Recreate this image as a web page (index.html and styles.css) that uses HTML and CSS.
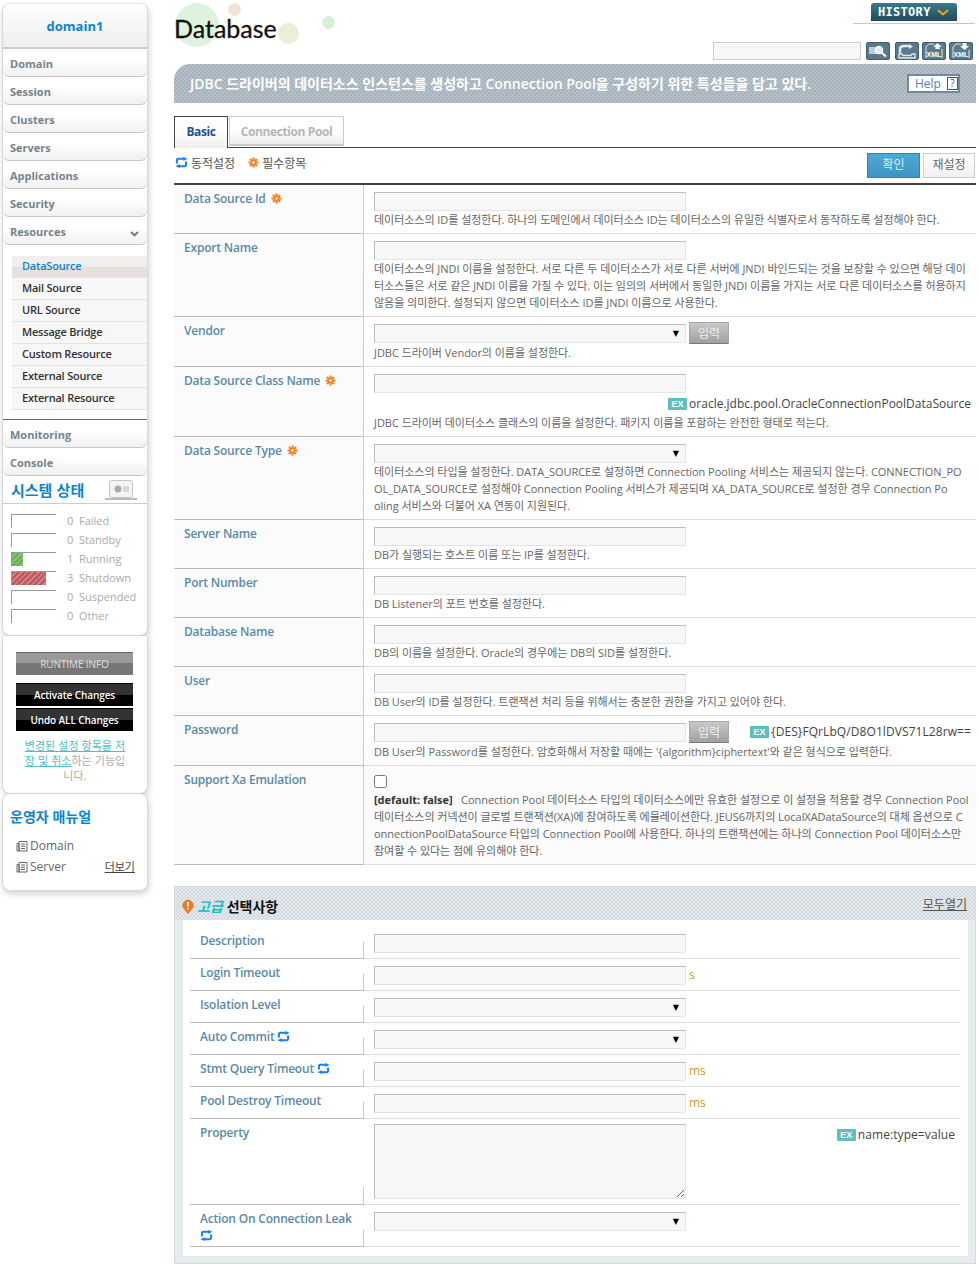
FILE: index.html
```html
<!doctype html>
<html lang="ko">
  <head>
    <meta charset="UTF-8" />
    <title>Database</title>
    <link rel="stylesheet" href="styles.css">
  </head>
  <body>
    <svg class="icon-defs" width="0" height="0">
      <symbol id="sync" viewBox="0 0 14 12">
        <path d="M2 7V3.200Q2 2 3.200 2H10" fill="none" stroke="currentColor" stroke-width="2.200"/>
        <path d="M9 0l4.500 2L9 4.400z" fill="currentColor"/>
        <path d="M12 5v3.800Q12 10 10.800 10H4" fill="none" stroke="currentColor" stroke-width="2.200"/>
        <path d="M5 7.600L.5 10 5 12z" fill="currentColor"/>
      </symbol>
      <symbol id="req" viewBox="0 0 12 12">
        <g stroke="currentColor" stroke-width="2.400">
          <path d="M6 .5v11M.5 6h11M2.100 2.100l7.800 7.800M9.900 2.100l-7.800 7.800"/>
        </g>
        <circle cx="6" cy="6" r="1.400" fill="#fff"/>
      </symbol>
      <symbol id="doc" viewBox="0 0 12 12">
        <path d="M3 1.500h8v9.500H3zM1 3.500h2v7.500H1zM5 4h4M5 6.200h4M5 8.500h4" fill="none" stroke="#666" stroke-width="1"/>
      </symbol>
    </svg>

    <div class="layout">
      <aside class="side">
        <div class="side-box">
          <div class="side-title">domain1</div>
          <a class="nav-item" href="#">Domain</a>
          <a class="nav-item" href="#">Session</a>
          <a class="nav-item" href="#">Clusters</a>
          <a class="nav-item" href="#">Servers</a>
          <a class="nav-item" href="#">Applications</a>
          <a class="nav-item" href="#">Security</a>
          <a class="nav-item nav-open" href="#">Resources
            <svg class="chev" width="9" height="6" viewBox="0 0 9 6"><path d="M1 1l3.500 3.500L8 1" fill="none" stroke="#777" stroke-width="1.800"/></svg>
          </a>
          <ul class="sub-nav">
            <li class="on">DataSource</li>
            <li>Mail Source</li>
            <li>URL Source</li>
            <li>Message Bridge</li>
            <li>Custom Resource</li>
            <li>External Source</li>
            <li>External Resource</li>
          </ul>
          <a class="nav-item nav-sep" href="#">Monitoring</a>
          <a class="nav-item" href="#">Console</a>

          <div class="status-head">
            <span>시스템 상태</span>
            <svg width="32" height="22" viewBox="0 0 32 22">
              <rect x="4.500" y="1.500" width="23" height="17" rx="2" fill="#f4f4f4" stroke="#c4c4c4"/>
              <circle cx="13" cy="10" r="3.500" fill="#aaa"/>
              <path d="M18 8h6M18 10h6M18 12h6" stroke="#bbb"/>
              <path d="M0 20h32" stroke="#bbb" stroke-width="2"/>
            </svg>
          </div>
          <div class="status-list">
            <div class="status-row"><span class="bar"></span><b>0</b><span>Failed</span></div>
            <div class="status-row"><span class="bar"></span><b>0</b><span>Standby</span></div>
            <div class="status-row"><span class="bar"><i class="fill-green" style="width:11px"></i></span><b>1</b><span>Running</span></div>
            <div class="status-row"><span class="bar"><i class="fill-red" style="width:34px"></i></span><b>3</b><span>Shutdown</span></div>
            <div class="status-row"><span class="bar"></span><b>0</b><span>Suspended</span></div>
            <div class="status-row"><span class="bar"></span><b>0</b><span>Other</span></div>
          </div>
        </div>

        <div class="side-box change-box">
          <button class="side-btn btn-grey">RUNTIME INFO</button>
          <button class="side-btn btn-black">Activate Changes</button>
          <button class="side-btn btn-black btn-tight">Undo ALL Changes</button>
          <p class="change-note"><a href="#">변경된 설정 항목을 저<br>장 및 취소</a>하는 기능입<br>니다.</p>
        </div>

        <div class="side-box manual-box">
          <h3>운영자 매뉴얼</h3>
          <div class="manual-row"><svg width="12" height="12"><use href="#doc"/></svg>Domain</div>
          <div class="manual-row"><svg width="12" height="12"><use href="#doc"/></svg>Server<a href="#">더보기</a></div>
        </div>
      </aside>

      <main class="main">
        <header class="page-head">
          <i class="dot dot-a"></i><i class="dot dot-b"></i><i class="dot dot-c"></i><i class="dot dot-d"></i>
          <h1>Database</h1>
          <div class="head-right">
            <div class="history">
              <span class="history-tab">HISTORY
                <svg width="12" height="7" viewBox="0 0 12 7"><path d="M1 1l5 4.500L11 1" fill="none" stroke="#f0a020" stroke-width="2"/></svg>
              </span>
            </div>
            <div class="tools">
              <input class="tool-input" type="text" />
              <span class="tool tool-search">
                <svg width="20" height="14" viewBox="0 0 20 14"><rect x="1" y="3" width="8" height="7" fill="#bcd"/><circle cx="11" cy="6" r="3.500" fill="#dde8f0" stroke="#fff" stroke-width="1.500"/><path d="M13.500 8.500L18 12.500" stroke="#fff" stroke-width="2"/></svg>
              </span>
              <span class="tool">
                <svg width="20" height="15" viewBox="0 0 20 15"><path d="M3 9V5Q3 2 7 2h6" fill="none" stroke="#e8e8e8" stroke-width="2.500"/><path d="M12 0l4 2.500L12 5z" fill="#e8e8e8"/><path d="M2 10h3l1 1.500h8l1-1.500h3v4H2z" fill="none" stroke="#e8e8e8" stroke-width="1.300"/></svg>
              </span>
              <span class="tool">
                <svg width="20" height="16" viewBox="0 0 20 16">
                  <path d="M2 15V4l3-3h5M15 5v1M18 6v9" fill="none" stroke="#dfe6ea"/>
                  <path d="M13.500 0L18 4h-2.500v2h-4V4H9z" fill="#fff"/>
                  <text class="xml-text" x="10" y="14">XML</text>
                </svg>
              </span>
              <span class="tool">
                <svg width="20" height="16" viewBox="0 0 20 16">
                  <path d="M2 15V4l3-3h5M18 7v8" fill="none" stroke="#dfe6ea"/>
                  <path d="M13.500 7L18 3h-2.500V0h-4v3H9z" fill="#fff"/>
                  <text class="xml-text" x="10" y="14">XML</text>
                </svg>
              </span>
            </div>
          </div>
        </header>

        <div class="banner">
          <p>JDBC 드라이버의 데이터소스 인스턴스를 생성하고 Connection Pool을 구성하기 위한 특성들을 담고 있다.</p>
          <a class="help" href="#">Help <span>?</span></a>
        </div>

        <div class="tabs">
          <a class="tab tab-on" href="#">Basic</a>
          <a class="tab" href="#">Connection Pool</a>
        </div>

        <div class="legend">
          <svg class="sync" width="13" height="11"><use href="#sync"/></svg><span>동적설정</span>
          <svg class="req legend-req" width="11" height="11"><use href="#req"/></svg><span>필수항목</span>
          <div class="legend-btns">
            <button class="btn-ok">확인</button>
            <button class="btn-reset">재설정</button>
          </div>
        </div>

        <section class="form-table">
          <div class="row">
            <div class="label">Data Source Id <svg class="req" width="11" height="11"><use href="#req"/></svg></div>
            <div class="cell">
              <input class="field" type="text" />
              <p class="desc">데이터소스의 ID를 설정한다. 하나의 도메인에서 데이터소스 ID는 데이터소스의 유일한 식별자로서 동작하도록 설정해야 한다.</p>
            </div>
          </div>
          <div class="row">
            <div class="label">Export Name</div>
            <div class="cell">
              <input class="field" type="text" />
              <p class="desc">데이터소스의 JNDI 이름을 설정한다. 서로 다른 두 데이터소스가 서로 다른 서버에 JNDI 바인드되는 것을 보장할 수 있으면 해당 데이<br>터소스들은 서로 같은 JNDI 이름을 가질 수 있다. 이는 임의의 서버에서 동일한 JNDI 이름을 가지는 서로 다른 데이터소스를 허용하지<br>않음을 의미한다. 설정되지 않으면 데이터소스 ID를 JNDI 이름으로 사용한다.</p>
            </div>
          </div>
          <div class="row row-btn">
            <div class="label">Vendor</div>
            <div class="cell">
              <div class="line">
                <span class="select"><select></select></span>
                <button class="btn-input">입력</button>
              </div>
              <p class="desc">JDBC 드라이버 Vendor의 이름을 설정한다.</p>
            </div>
          </div>
          <div class="row">
            <div class="label">Data Source Class Name <svg class="req" width="11" height="11"><use href="#req"/></svg></div>
            <div class="cell">
              <input class="field" type="text" />
              <div class="hint hint-line"><span class="ex">EX</span>oracle.jdbc.pool.OracleConnectionPoolDataSource</div>
              <p class="desc">JDBC 드라이버 데이터소스 클래스의 이름을 설정한다. 패키지 이름을 포함하는 완전한 형태로 적는다.</p>
            </div>
          </div>
          <div class="row">
            <div class="label">Data Source Type <svg class="req" width="11" height="11"><use href="#req"/></svg></div>
            <div class="cell">
              <span class="select"><select></select></span>
              <p class="desc">데이터소스의 타입을 설정한다. DATA_SOURCE로 설정하면 Connection Pooling 서비스는 제공되지 않는다. CONNECTION_PO<br>OL_DATA_SOURCE로 설정해야 Connection Pooling 서비스가 제공되며 XA_DATA_SOURCE로 설정한 경우 Connection Po<br>oling 서비스와 더불어 XA 연동이 지원된다.</p>
            </div>
          </div>
          <div class="row">
            <div class="label">Server Name</div>
            <div class="cell">
              <input class="field" type="text" />
              <p class="desc">DB가 실행되는 호스트 이름 또는 IP를 설정한다.</p>
            </div>
          </div>
          <div class="row">
            <div class="label">Port Number</div>
            <div class="cell">
              <input class="field" type="text" />
              <p class="desc">DB Listener의 포트 번호를 설정한다.</p>
            </div>
          </div>
          <div class="row">
            <div class="label">Database Name</div>
            <div class="cell">
              <input class="field" type="text" />
              <p class="desc">DB의 이름을 설정한다. Oracle의 경우에는 DB의 SID를 설정한다.</p>
            </div>
          </div>
          <div class="row">
            <div class="label">User</div>
            <div class="cell">
              <input class="field" type="text" />
              <p class="desc">DB User의 ID를 설정한다. 트랜잭션 처리 등을 위해서는 충분한 권한을 가지고 있어야 한다.</p>
            </div>
          </div>
          <div class="row row-btn">
            <div class="label">Password</div>
            <div class="cell">
              <div class="line">
                <input class="field" type="text" />
                <button class="btn-input">입력</button>
                <div class="hint"><span class="ex">EX</span>{DES}FQrLbQ/D8O1lDVS71L28rw==</div>
              </div>
              <p class="desc">DB User의 Password를 설정한다. 암호화해서 저장할 때에는 '{algorithm}ciphertext'와 같은 형식으로 입력한다.</p>
            </div>
          </div>
          <div class="row row-tint">
            <div class="label">Support Xa Emulation</div>
            <div class="cell">
              <input class="check" type="checkbox" />
              <p class="desc"><b>[default: false]</b> &nbsp; Connection Pool 데이터소스 타입의 데이터소스에만 유효한 설정으로 이 설정을 적용할 경우 Connection Pool<br>데이터소스의 커넥션이 글로벌 트랜잭션(XA)에 참여하도록 에뮬레이션한다. JEUS6까지의 LocalXADataSource의 대체 옵션으로 C<br>onnectionPoolDataSource 타입의 Connection Pool에 사용한다. 하나의 트랜잭션에는 하나의 Connection Pool 데이터소스만<br>참여할 수 있다는 점에 유의해야 한다.</p>
            </div>
          </div>
        </section>

        <section class="adv">
          <div class="adv-head">
            <svg width="12" height="15" viewBox="0 0 12 15"><path d="M6 15L1.500 9.500A5.500 5.500 0 1 1 10.500 9.500z" fill="#f07a20"/><path d="M6 3v4.500M6 9v1.500" stroke="#fff" stroke-width="2"/></svg>
            <h2><em>고급</em> 선택사항</h2>
            <a href="#">모두열기</a>
          </div>
          <div class="adv-body">
            <div class="adv-row">
              <div class="label">Description</div>
              <div class="cell"><input class="field" type="text" /></div>
            </div>
            <div class="adv-row">
              <div class="label">Login Timeout</div>
              <div class="cell"><input class="field" type="text" /><span class="unit">s</span></div>
            </div>
            <div class="adv-row">
              <div class="label">Isolation Level</div>
              <div class="cell"><span class="select"><select></select></span></div>
            </div>
            <div class="adv-row">
              <div class="label">Auto Commit <svg class="sync" width="13" height="11"><use href="#sync"/></svg></div>
              <div class="cell"><span class="select"><select></select></span></div>
            </div>
            <div class="adv-row">
              <div class="label">Stmt Query Timeout <svg class="sync" width="13" height="11"><use href="#sync"/></svg></div>
              <div class="cell"><input class="field" type="text" /><span class="unit">ms</span></div>
            </div>
            <div class="adv-row">
              <div class="label">Pool Destroy Timeout</div>
              <div class="cell"><input class="field" type="text" /><span class="unit">ms</span></div>
            </div>
            <div class="adv-row adv-prop">
              <div class="label">Property</div>
              <div class="cell">
                <textarea class="area"></textarea>
                <div class="hint hint-top"><span class="ex">EX</span>name:type=value</div>
              </div>
            </div>
            <div class="adv-row adv-leak">
              <div class="label">Action On Connection Leak<br><svg class="sync" width="13" height="11"><use href="#sync"/></svg></div>
              <div class="cell"><span class="select"><select></select></span></div>
            </div>
          </div>
        </section>
      </main>
    </div>
  </body>
</html>
```

FILE: styles.css
```css
/* Reset and general styles */
* {
  margin: 0;
  padding: 0;
  box-sizing: border-box;
}

body {
  background-color: #fff;
  color: #555;
  font-family: "Open Sans", "Noto Sans CJK KR", sans-serif;
  font-size: 12px;
  line-height: 17px;
}

a {
  color: inherit;
  text-decoration: none;
}

.icon-defs {
  position: absolute;
}

.sync {
  color: #1a7ff0;
  vertical-align: -1px;
}

.req {
  color: #f58220;
  vertical-align: -1px;
  margin-left: 2px;
}

.layout {
  display: flex;
  align-items: flex-start;
}

/* Sidebar */
.side {
  width: 146px;
  margin: 3px 0 0 2px;
  flex: none;
}

.side-box {
  background-color: #fff;
  border: 1px solid #d8d8d8;
  border-top-color: #e8e8e8;
  border-radius: 8px;
  box-shadow: 1px 3px 6px rgba(0, 0, 0, 0.18);
}

.side-title {
  height: 45px;
  border-bottom: 2px solid #ccc;
  background: linear-gradient(#fff, #eee);
  border-radius: 8px 8px 0 0;
  color: #0a84d0;
  font-size: 13px;
  font-weight: 700;
  text-align: center;
  line-height: 44px;
}

.nav-item {
  display: block;
  position: relative;
  height: 28px;
  padding: 6px 0 0 7px;
  background: linear-gradient(#fff 40%, #f0f0f0);
  border-bottom: 1px solid #c8c8c8;
  border-radius: 0 0 6px 6px;
  color: #76838d;
  font-size: 11px;
  font-weight: 700;
}

.chev {
  position: absolute;
  right: 8px;
  top: 14px;
}

.sub-nav {
  list-style: none;
  padding: 11px 0 10px 9px;
  height: 174px;
}

.sub-nav li {
  height: 22px;
  padding: 1px 0 0 10px;
  background-color: #f7f7f7;
  border-bottom: 1px solid #e2e2e2;
  color: #333;
  font-size: 11px;
  font-weight: 600;
  letter-spacing: -0.2px;
}

.sub-nav li.on {
  background: linear-gradient(#f1efee 50%, #e6e1df 50%);
  border-bottom: 0;
  color: #0a84d0;
}

.nav-sep {
  height: 29px;
  border-top: 1px solid #666;
}

.status-head {
  display: flex;
  justify-content: space-between;
  align-items: center;
  height: 28px;
  padding: 0 10px 0 8px;
  border-bottom: 1px solid #ccc;
  color: #0a84d0;
  font-family: "Noto Sans CJK KR", sans-serif;
  font-size: 15px;
  font-weight: 700;
}

.status-list {
  padding: 10px 0 7px 8px;
}

.status-row {
  display: flex;
  height: 19px;
  color: #aaa;
  font-size: 11px;
}

.status-row b {
  width: 10px;
  margin: -2px 2px 0 11px;
  font-weight: 400;
}

.status-row span:last-child {
  margin-top: -2px;
}

.bar {
  display: block;
  width: 45px;
  height: 14px;
  border-top: 1px solid #999;
  border-left: 1px solid #999;
}

.bar i {
  display: block;
  height: 13px;
}

.fill-green {
  background: repeating-linear-gradient(135deg, #6cae5a 0 2px, #86c274 2px 4px);
}

.fill-red {
  background: repeating-linear-gradient(135deg, #b85a5c 0 2px, #d08084 2px 4px);
}

/* Change box */
.change-box {
  padding: 16px 0 10px;
  text-align: center;
  border-top: 0;
  border-radius: 0 0 8px 8px;
}

.side-btn {
  display: block;
  width: 117px;
  height: 23px;
  margin: 0 0 7px 13px;
  border: 0;
  color: #fff;
  font-family: "Open Sans", sans-serif;
  font-size: 10px;
  font-weight: 600;
  letter-spacing: -0.1px;
}

.btn-grey {
  margin-bottom: 8px;
  background: linear-gradient(#999 45%, #777 45%);
  border-top: 1px solid #666;
  color: #ddd;
  font-weight: 400;
}

.btn-black {
  background: linear-gradient(#333 50%, #000 50%);
  border-top: 1px solid #000;
}

.btn-tight {
  margin-top: -5px;
}

.change-note {
  width: 104px;
  margin: 1px auto 0;
  color: #b0a8a8;
  font-family: "Noto Sans CJK KR", sans-serif;
  font-size: 11px;
  line-height: 15px;
}

.change-note a {
  color: #53bcc2;
  text-decoration: underline;
}

/* Manual */
.manual-box {
  height: 97px;
  padding: 12px 7px 0;
  border-top: 0;
}

.manual-box h3 {
  color: #0a84d0;
  font-family: "Noto Sans CJK KR", sans-serif;
  font-size: 14px;
  font-weight: 700;
  line-height: 20px;
  margin-bottom: 9px;
}

.manual-row {
  display: flex;
  align-items: center;
  gap: 2px;
  height: 21px;
  padding-left: 6px;
  color: #666;
}

.manual-row a {
  margin-left: auto;
  margin-right: 5px;
  color: #444;
  font-size: 11px;
  font-family: "Noto Sans CJK KR", sans-serif;
  text-decoration: underline;
}

/* Main content */
.main {
  flex: 1;
  min-width: 0;
  margin: 0 3px 0 26px;
}

.page-head {
  position: relative;
  display: flex;
  justify-content: space-between;
  height: 64px;
}

.page-head h1 {
  position: relative;
  padding-top: 9px;
  color: #111;
  font-family: "Lato", sans-serif;
  font-size: 25px;
  font-weight: 400;
  line-height: 38px;
  -webkit-text-stroke: 0.3px #111;
}

.dot {
  position: absolute;
  border-radius: 50%;
}

.dot-a {
  left: 1px;
  top: 3px;
  width: 44px;
  height: 44px;
  background-color: #dff1df;
}

.dot-b {
  left: 54px;
  top: 3px;
  width: 13px;
  height: 13px;
  background-color: #f0e4da;
}

.dot-c {
  left: 104px;
  top: 23px;
  width: 21px;
  height: 21px;
  background-color: #e8f0d8;
}

.dot-d {
  left: 148px;
  top: 16px;
  width: 13px;
  height: 13px;
  background-color: #d8efd8;
}

.head-right {
  display: flex;
  flex-direction: column;
  align-items: flex-end;
}

.history {
  width: 122px;
  height: 21px;
  margin-top: 3px;
  margin-right: 1px;
  text-align: center;
  border-bottom: 1px solid #a8d0dc;
}

.history-tab {
  display: inline-flex;
  align-items: center;
  gap: 6px;
  width: 86px;
  height: 18px;
  padding: 1px 0 0 7px;
  background: linear-gradient(#3c7a8a, #1f4a5a);
  border-radius: 3px 3px 0 0;
  color: #fff;
  font-family: "DejaVu Sans Mono", monospace;
  font-size: 12px;
  font-weight: 700;
  letter-spacing: 0.3px;
}

.tools {
  display: flex;
  align-items: flex-start;
  gap: 3px;
  margin-top: 18px;
  margin-right: 3px;
}

.tool-input {
  width: 148px;
  height: 18px;
  margin-right: 2px;
  background-color: #f8f8f8;
  border: 1px solid #ccc;
}

.tool {
  display: flex;
  justify-content: center;
  align-items: center;
  width: 24px;
  height: 18px;
  background-color: #5a7a8c;
  border: 1px solid #3f5f70;
  border-radius: 2px;
}

.tool-search {
  margin-right: 2px;
}

.xml-text {
  fill: #fff;
  font-family: "Liberation Sans", sans-serif;
  font-size: 7px;
  font-weight: 700;
  text-anchor: middle;
}

.banner {
  display: flex;
  justify-content: space-between;
  align-items: center;
  height: 39px;
  padding: 0 16px;
  background: repeating-conic-gradient(#a6b3bd 0 25%, #b4bfc8 0 50%) 0 0 / 4px 4px;
  border-radius: 16px 0 0 0;
  color: #fff;
  font-size: 14px;
  font-weight: 600;
}

.help {
  display: flex;
  align-items: center;
  gap: 6px;
  width: 53px;
  height: 19px;
  padding-left: 6px;
  background-color: #fff;
  border: 2px solid #6f8ba3;
  color: #5a7fa8;
  font-size: 12px;
  font-weight: 400;
}

.help span {
  width: 13px;
  height: 13px;
  border: 1px solid #555;
  color: #555;
  font-size: 10px;
  line-height: 11px;
  text-align: center;
}

/* Tabs */
.tabs {
  display: flex;
  gap: 1px;
  height: 45px;
  padding-top: 13px;
  border-bottom: 1px solid #444;
}

.tab {
  width: 115px;
  height: 30px;
  background: linear-gradient(#fff 50%, #eee);
  border: 1px solid #ccc;
  border-bottom-width: 2px;
  color: #b5b5b5;
  font-weight: 700;
  text-align: center;
  line-height: 30px;
  letter-spacing: -0.4px;
}

.tab-on {
  width: 54px;
  height: 32px;
  border-color: #444;
  border-bottom: 0;
  color: #1f4f9c;
}

.legend {
  display: flex;
  align-items: center;
  gap: 3px;
  height: 35px;
  padding: 0 1px 7px;
  color: #555;
  font-family: "Noto Sans CJK KR", sans-serif;
}

.legend-req {
  margin-left: 10px;
}

.legend-btns {
  display: flex;
  gap: 3px;
  margin-left: auto;
  padding-top: 6px;
}

.legend-btns button {
  height: 25px;
  padding-bottom: 3px;
  font-family: "Noto Sans CJK KR", sans-serif;
  font-size: 12px;
}

.btn-ok {
  width: 53px;
  background: linear-gradient(#50a8d4, #3c95c4);
  border: 1px solid #2e86b0;
  color: #d8eef8;
}

.btn-reset {
  width: 52px;
  background: linear-gradient(#fff, #f0f0f0);
  border: 1px solid #ccc;
  color: #666;
}

/* Form table */
.form-table {
  border-top: 2px solid #444;
}

.row {
  display: grid;
  grid-template-columns: 190px 1fr;
}

.label {
  position: relative;
  padding: 5px 0 0 10px;
  background-color: #fbfbfb;
  border-bottom: 1px solid #bbb;
  color: #5a8aa8;
  font-weight: 600;
  letter-spacing: -0.2px;
}

.row .label {
  border-right: 1px solid #ccc;
}

.cell {
  padding: 7px 5px 5px 10px;
  border-bottom: 1px solid #ddd;
}

.row-btn .cell {
  padding-top: 5px;
}

.row-btn .field,
.row-btn .select {
  margin-top: 2px;
}

.row-tint .cell {
  background-color: #fbfbfb;
}

.field,
.select select {
  display: block;
  width: 312px;
  height: 19px;
  background-color: #f7f7f7;
  border: 1px solid #e4e4e4;
  border-top-color: #bbb;
  border-left-color: #bbb;
}

.select {
  position: relative;
  display: block;
  width: 312px;
  flex: none;
}

.select select {
  appearance: none;
}

.select::after {
  content: "▼";
  position: absolute;
  right: 7px;
  top: 1px;
  color: #000;
  font-family: "DejaVu Sans", sans-serif;
  font-size: 8px;
}

.line {
  display: flex;
  align-items: flex-start;
}

.line .field {
  flex: none;
}

.desc {
  color: #666;
  font-size: 11px;
  letter-spacing: -0.04px;
  white-space: nowrap;
}

.desc b {
  color: #333;
}

.btn-input {
  width: 40px;
  height: 22px;
  margin-left: 3px;
  padding-bottom: 2px;
  background: linear-gradient(#c8c8c8, #a0a0a0);
  border: 1px solid #a8a8a8;
  border-bottom-color: #777;
  color: #eee;
  font-family: "Noto Sans CJK KR", sans-serif;
  font-size: 12px;
}

.hint {
  display: flex;
  align-items: center;
  justify-content: flex-end;
  margin-left: auto;
  color: #444;
  font-size: 12px;
  white-space: nowrap;
}

.hint-line {
  height: 17px;
  margin: 2px 0 2px;
}

.line .hint,
.hint-top {
  letter-spacing: 0.08px;
}

.row-btn .hint {
  margin-top: 2px;
}

.ex {
  flex: none;
  width: 19px;
  height: 12px;
  margin-right: 2px;
  background-color: #5fbfc0;
  border-radius: 1px;
  color: #fff;
  font-family: "Liberation Sans", sans-serif;
  font-size: 9px;
  font-weight: 700;
  line-height: 12px;
  text-align: center;
}

.check {
  display: block;
  width: 13px;
  height: 13px;
  margin: 2px 0 3px;
}

/* Advanced options */
.adv {
  margin-top: 21px;
  padding-bottom: 7px;
  background-color: #e6ebee;
  border: 1px solid #d5dadd;
}

.adv-head {
  display: flex;
  align-items: center;
  gap: 3px;
  height: 33px;
  padding: 5px 8px 0 7px;
  background: repeating-conic-gradient(#d5dbe0 0 25%, #e2e7ea 0 50%) 0 0 / 4px 4px;
}

.adv-head h2 {
  color: #111;
  font-family: "Noto Sans CJK KR", sans-serif;
  font-size: 14px;
  font-weight: 700;
}

.adv-head em {
  color: #10c0c4;
  font-style: italic;
}

.adv-head a {
  margin-left: auto;
  margin-top: -6px;
  color: #555;
  font-family: "Noto Sans CJK KR", sans-serif;
  text-decoration: underline;
}

.adv-body {
  margin: 0 7px 0 8px;
  padding: 7px 8px 9px 7px;
  background-color: #fff;
}

.adv-row {
  display: grid;
  grid-template-columns: 174px 1fr;
  height: 32px;
}

.adv-row .label {
  background-color: #fff;
}

.adv-row .label::after {
  content: "";
  position: absolute;
  right: 0;
  bottom: 0;
  width: 1px;
  height: 17px;
  background-color: #ccc;
}

.adv-row .cell {
  display: flex;
  align-items: flex-start;
  padding-right: 5px;
}

.unit {
  margin: 0 0 0 3px;
  color: #e0952f;
}

.adv-prop {
  height: 86px;
}

.adv-prop .cell {
  padding-top: 5px;
}

.area {
  width: 312px;
  height: 75px;
  background-color: #f7f7f7;
  border: 1px solid #e4e4e4;
  border-top-color: #bbb;
  border-left-color: #bbb;
}

.hint-top {
  margin-top: 2px;
}

.adv-leak {
  height: 42px;
}
```
